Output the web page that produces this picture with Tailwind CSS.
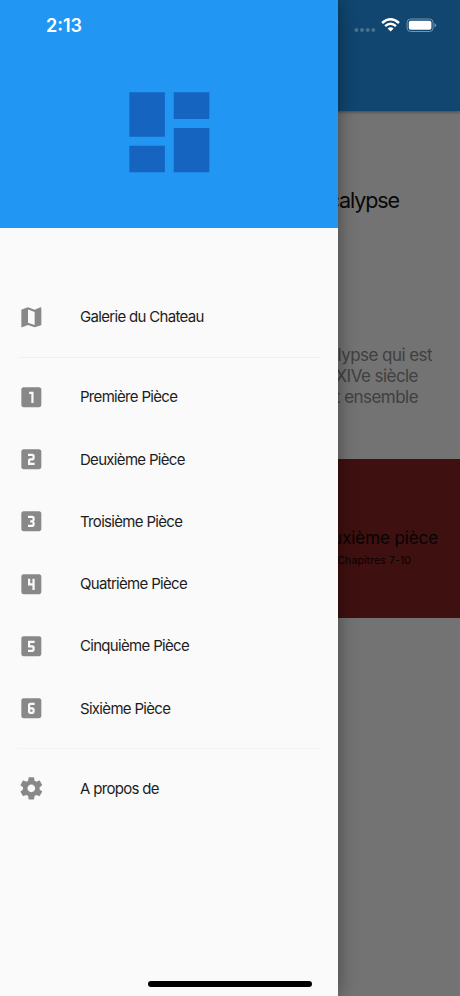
<!DOCTYPE html>
<html lang="fr">
<head>
<meta charset="utf-8">
<title>Galerie du Chateau</title>
<script src="https://cdn.jsdelivr.net/npm/@tailwindcss/browser@4"></script>
</head>
<body class="relative h-[996px] w-[460px] overflow-hidden bg-[#737373] font-['Inter','Liberation_Sans',sans-serif]">
<!-- Page under the drawer -->
<main class="flex h-full w-full flex-col text-right whitespace-nowrap">
  <header class="h-[111px] shrink-0 bg-[#10466f] shadow-[0_1px_3px_rgba(0,0,0,0.4)]"></header>
  <h1 class="mt-[75px] pr-[61px] text-[21.5px] leading-[28px] tracking-[-1.1px] text-[#080808]">Apocalypse</h1>
  <div class="mt-[131px] h-[114px] text-[17px] leading-[21px] tracking-[-0.55px] text-[#404040]">
    <p class="pr-[28px]">l’Apocalypse qui est</p>
    <p class="pr-[42px]">au XIVe siècle</p>
    <p class="pr-[42px]">et ensemble</p>
  </div>
  <section class="h-[159px] shrink-0 bg-[#3f1010] pt-[67px] text-[#080303]">
    <h2 class="pr-[22px] text-[17px] leading-[24px] tracking-[-0.1px]">Deuxième pièce</h2>
    <p class="mt-[3px] pr-[49px] text-[10.5px] leading-[16px] tracking-[0.1px]">Chapitres 7-10</p>
  </section>
</main>

<!-- Drawer -->
<aside class="absolute inset-y-0 left-0 flex w-[337.78px] flex-col bg-[#fafafa] shadow-[0_0_18px_rgba(0,0,0,0.4)]">
  <div class="flex h-[228px] shrink-0 justify-center bg-[#2196f3] pt-[78.5px]">
    <svg class="size-[106.67px] fill-[#1565c0]" viewBox="0 0 24 24"><path d="M3 13h8V3H3v10zm0 8h8v-6H3v6zm10 0h8V11h-8v10zm0-18v6h8V3h-8z"/></svg>
  </div>
  <nav class="flex flex-col pt-[58.1px] text-[15px] tracking-[-0.68px] text-[#1d1d1d]">
    <a class="flex h-[62.22px] items-center gap-[35.5px] pl-[17.8px]"><svg class="size-[26.67px] fill-[#888]" viewBox="0 0 24 24"><path d="M20.5 3l-.16.03L15 5.1 9 3 3.36 4.9c-.21.07-.36.25-.36.48V20.5c0 .28.22.5.5.5l.16-.03L9 18.9l6 2.1 5.64-1.9c.21-.07.36-.25.36-.48V3.5c0-.28-.22-.5-.5-.5zM15 19l-6-2.11V5l6 2.11V19z"/></svg><span class="pt-px">Galerie du Chateau</span></a>
    <div class="flex h-[17.78px] items-center px-[18px]"><div class="h-px w-full bg-[#f0f0f0]"></div></div>
    <a class="flex h-[62.22px] items-center gap-[35.5px] pl-[17.8px]"><svg class="size-[26.67px] fill-[#888]" viewBox="0 0 24 24"><path d="M19 3H5c-1.1 0-2 .9-2 2v14c0 1.1.9 2 2 2h14c1.1 0 2-.9 2-2V5c0-1.1-.9-2-2-2zm-5 14h-2V9h-2V7h4v10z"/></svg><span class="pt-px">Première Pièce</span></a>
    <a class="flex h-[62.22px] items-center gap-[35.5px] pl-[17.8px]"><svg class="size-[26.67px] fill-[#888]" viewBox="0 0 24 24"><path d="M19 3H5c-1.1 0-2 .9-2 2v14c0 1.1.9 2 2 2h14c1.1 0 2-.9 2-2V5c0-1.1-.9-2-2-2zm-4 8c0 1.11-.9 2-2 2h-2v2h4v2H9v-4c0-1.11.9-2 2-2h2V9H9V7h4c1.1 0 2 .89 2 2v2z"/></svg><span class="pt-px">Deuxième Pièce</span></a>
    <a class="flex h-[62.22px] items-center gap-[35.5px] pl-[17.8px]"><svg class="size-[26.67px] fill-[#888]" viewBox="0 0 24 24"><path d="M19 3H5c-1.1 0-2 .9-2 2v14c0 1.1.9 2 2 2h14c1.1 0 2-.9 2-2V5c0-1.1-.9-2-2-2zm-4 7.5c0 .83-.67 1.5-1.5 1.5.83 0 1.5.67 1.5 1.5V15c0 1.11-.9 2-2 2H9v-2h4v-2h-2v-2h2V9H9V7h4c1.1 0 2 .89 2 2v1.5z"/></svg><span class="pt-px">Troisième Pièce</span></a>
    <a class="flex h-[62.22px] items-center gap-[35.5px] pl-[17.8px]"><svg class="size-[26.67px] fill-[#888]" viewBox="0 0 24 24"><path d="M19 3H5c-1.1 0-2 .9-2 2v14c0 1.1.9 2 2 2h14c1.1 0 2-.9 2-2V5c0-1.1-.9-2-2-2zm-4 14h-2v-4H9V7h2v4h2V7h2v10z"/></svg><span class="pt-px">Quatrième Pièce</span></a>
    <a class="flex h-[62.22px] items-center gap-[35.5px] pl-[17.8px]"><svg class="size-[26.67px] fill-[#888]" viewBox="0 0 24 24"><path d="M19 3H5c-1.1 0-2 .9-2 2v14c0 1.1.9 2 2 2h14c1.1 0 2-.9 2-2V5c0-1.1-.9-2-2-2zm-4 6h-4v2h2c1.1 0 2 .89 2 2v2c0 1.11-.9 2-2 2H9v-2h4v-2H9V7h6v2z"/></svg><span class="pt-px">Cinquième Pièce</span></a>
    <a class="flex h-[62.22px] items-center gap-[35.5px] pl-[17.8px]"><svg class="size-[26.67px] fill-[#888]" viewBox="0 0 24 24"><path d="M11 15h2v-2h-2v2zm8-12H5c-1.1 0-2 .9-2 2v14c0 1.1.9 2 2 2h14c1.1 0 2-.9 2-2V5c0-1.1-.9-2-2-2zm-4 6h-4v2h2c1.1 0 2 .89 2 2v2c0 1.11-.9 2-2 2h-2c-1.1 0-2-.89-2-2V9c0-1.11.9-2 2-2h4v2z"/></svg><span class="pt-px">Sixième Pièce</span></a>
    <div class="flex h-[17.78px] items-center px-[18px]"><div class="h-px w-full bg-[#f4f4f4]"></div></div>
    <a class="flex h-[62.22px] items-center gap-[35.5px] pl-[17.8px]"><svg class="size-[26.67px] fill-[#888]" viewBox="0 0 24 24"><path d="M19.43 12.98c.04-.32.07-.64.07-.98s-.03-.66-.07-.98l2.11-1.65c.19-.15.24-.42.12-.64l-2-3.46c-.12-.22-.39-.3-.61-.22l-2.49 1c-.52-.4-1.08-.73-1.69-.98l-.38-2.65C14.46 2.18 14.25 2 14 2h-4c-.25 0-.46.18-.49.42l-.38 2.65c-.61.25-1.17.59-1.69.98l-2.49-1c-.23-.09-.49 0-.61.22l-2 3.46c-.13.22-.07.49.12.64l2.11 1.65c-.04.32-.07.65-.07.98s.03.66.07.98l-2.11 1.65c-.19.15-.24.42-.12.64l2 3.46c.12.22.39.3.61.22l2.49-1c.52.4 1.08.73 1.69.98l.38 2.65c.03.24.24.42.49.42h4c.25 0 .46-.18.49-.42l.38-2.65c.61-.25 1.17-.59 1.69-.98l2.49 1c.23.09.49 0 .61-.22l2-3.46c.12-.22.07-.49-.12-.64l-2.11-1.65zM12 15.5c-1.93 0-3.5-1.57-3.5-3.5s1.57-3.5 3.5-3.5 3.5 1.57 3.5 3.5-1.57 3.5-3.5 3.5z"/></svg><span class="pt-px">A propos de</span></a>
  </nav>
</aside>

<!-- System status bar -->
<div class="absolute inset-x-0 top-0 flex h-[50px] items-center justify-between pr-[23px] pl-[46px] text-white">
  <span class="text-[18px] font-semibold tracking-[0px]">2:13</span>
  <div class="flex items-center">
    <svg class="h-[20px] w-[84px]" viewBox="0 0 84 20">
      <g fill="#467190"><circle cx="3.4" cy="15" r="2"/><circle cx="9" cy="15" r="2"/><circle cx="14.7" cy="15" r="2"/><circle cx="20.3" cy="15" r="2"/></g>
      <g fill="none" stroke="#fff" stroke-width="2.5"><path d="M29.1 8Q37.5 .5 46 8"/><path d="M32.1 11.1Q37.5 6.4 43 11.1"/></g>
      <path fill="#fff" d="M34.6 13.5Q37.6 11 40.6 13.5L37.6 16.6Z"/>
      <rect x="54.1" y="4" width="26" height="12.5" rx="3.5" fill="none" stroke="#7795aa"/>
      <rect x="55.8" y="5.7" width="22.6" height="9.1" rx="1.8" fill="#fff"/>
      <path d="M81.5 8.2q1.7.7 1.7 2.1t-1.7 2.1z" fill="#7795aa"/>
    </svg>
  </div>
</div>
<!-- Home indicator -->
<div class="absolute bottom-[9px] left-[148px] h-[6px] w-[164px] rounded-full bg-black"></div>
</body>
</html>
